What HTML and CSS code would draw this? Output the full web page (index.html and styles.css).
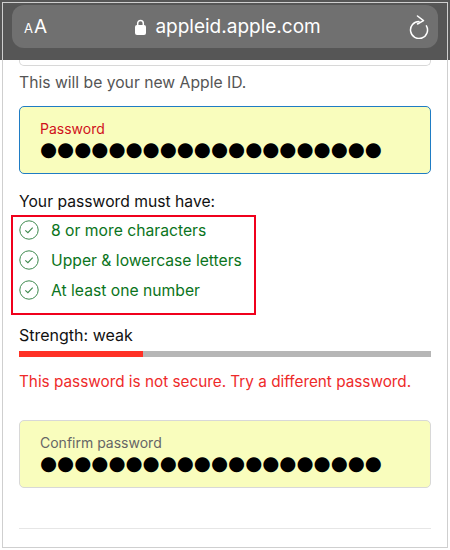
FILE: index.html
```html
<!DOCTYPE html>
<html lang="en">
<head>
    <meta charset="UTF-8">
    <title>Apple ID password</title>
    <meta name="viewport" content="width=device-width, initial-scale=1">
    <link rel="stylesheet" href="styles.css">
</head>
<body>
    <div class="screen">
        <header class="toolbar">
            <div class="address-bar">
                <span class="text-size"><small>A</small>A</span>
                <span class="address">
                    <svg class="lock" width="11" height="16" viewBox="0 0 11 16">
                        <path d="M2.7 7V4.2a2.8 2.8 0 0 1 5.6 0V7" fill="none" stroke="#fff" stroke-width="1.5"/>
                        <rect x="0" y="6" width="11" height="10" rx="2" fill="#fff"/>
                    </svg>
                    appleid.apple.com
                </span>
                <svg class="reload" width="20" height="24" viewBox="0 0 20 24">
                    <path d="M10 6.5A8.5 8.5 0 1 0 17.4 10.8" fill="none" stroke="#fff" stroke-width="1.5" stroke-linecap="round"/>
                    <path d="M8.5 1l6 4.6-6 3.4" fill="none" stroke="#fff" stroke-width="1.5" stroke-linecap="round" stroke-linejoin="round"/>
                </svg>
            </div>
        </header>

        <main class="content">
            <div class="field-stub"></div>
            <p class="hint">This will be your new Apple ID.</p>

            <div class="field field-focus">
                <div class="field-label label-error">Password</div>
                <div class="dots">●●●●●●●●●●●●●●●●●●●●</div>
            </div>

            <p class="rules-title">Your password must have:</p>
            <ul class="rules">
                <li>
                    <svg width="20" height="20" viewBox="0 0 20 20"><circle cx="10" cy="10" r="9.2" fill="none" stroke="#3d8a4e" stroke-width="1"/><path d="M6.3 10.3l2.6 2.4 4.8-5" fill="none" stroke="#3d8a4e" stroke-width="1.1"/></svg>
                    8 or more characters
                </li>
                <li>
                    <svg width="20" height="20" viewBox="0 0 20 20"><circle cx="10" cy="10" r="9.2" fill="none" stroke="#3d8a4e" stroke-width="1"/><path d="M6.3 10.3l2.6 2.4 4.8-5" fill="none" stroke="#3d8a4e" stroke-width="1.1"/></svg>
                    Upper &amp; lowercase letters
                </li>
                <li>
                    <svg width="20" height="20" viewBox="0 0 20 20"><circle cx="10" cy="10" r="9.2" fill="none" stroke="#3d8a4e" stroke-width="1"/><path d="M6.3 10.3l2.6 2.4 4.8-5" fill="none" stroke="#3d8a4e" stroke-width="1.1"/></svg>
                    At least one number
                </li>
            </ul>

            <p class="strength">Strength: weak</p>
            <div class="meter"><div class="meter-fill" style="width: 30%"></div></div>
            <p class="error">This password is not secure. Try a different password.</p>

            <div class="field field-confirm">
                <div class="field-label">Confirm password</div>
                <div class="dots">●●●●●●●●●●●●●●●●●●●●</div>
            </div>

            <hr class="divider">
        </main>

        <div class="frame"></div>
    </div>
</body>
</html>
```

FILE: styles.css
```css
body {
    margin: 0;
    background: white;
    font-family: Inter, "Liberation Sans", sans-serif;
}

.screen {
    position: relative;
    width: 450px;
    height: 550px;
    overflow: hidden;
}

.frame {
    position: absolute;
    top: 2px;
    left: 2px;
    right: 2px;
    bottom: 2px;
    border: 1px solid #cfcfcf;
    pointer-events: none;
}

.toolbar {
    height: 60px;
    box-sizing: border-box;
    padding: 5px 12px 0;
    background: #565656;
}

.address-bar {
    height: 43px;
    display: flex;
    align-items: center;
    justify-content: space-between;
    padding: 0 9px 0 12px;
    border-radius: 12px;
    background: #707070;
    color: white;
}

.text-size {
    font-size: 19px;
    line-height: 1;
}

.text-size small {
    font-size: 13px;
    margin-right: 1px;
}

.address {
    display: flex;
    align-items: center;
    gap: 9px;
    font-size: 19px;
}

.content {
    padding: 0 19px;
}

.field-stub {
    height: 5px;
    border: 1px solid #d8d8d8;
    border-top: none;
    border-radius: 0 0 5px 5px;
}

.hint {
    margin: 7px 0 0;
    font-size: 15.7px;
    line-height: 20px;
    color: #555;
}

.field {
    height: 68px;
    box-sizing: border-box;
    padding: 10px 20px 0;
    background: #f9fdbd;
    border: 1px solid #d8d8d8;
    border-radius: 5px;
}

.field-focus {
    margin-top: 13px;
    border-color: #1f7cc4;
}

.field-confirm {
    margin-top: 28px;
}

.field-label {
    font-size: 14px;
    line-height: 24px;
    color: #666;
}

.label-error {
    color: #d0121b;
}

.dots {
    font-family: "DejaVu Sans", sans-serif;
    font-size: 19.6px;
    line-height: 18px;
    color: black;
    white-space: nowrap;
}

.rules-title {
    margin: 18px 0 0;
    font-size: 15.7px;
    line-height: 20px;
    color: #111;
}

.rules {
    list-style: none;
    width: 245px;
    height: 100px;
    box-sizing: border-box;
    margin: 3px 0 0 -8px;
    padding: 0 0 0 6px;
    border: 2px solid #f0001c;
}

.rules li {
    height: 26px;
    margin-bottom: 4px;
    display: flex;
    align-items: center;
    gap: 12px;
    font-size: 15.7px;
    color: #0a7420;
}

.strength {
    margin: 10px 0 0;
    font-size: 16px;
    line-height: 20px;
    color: #111;
}

.meter {
    height: 6px;
    margin-top: 6px;
    background: #b6b6b6;
}

.meter-fill {
    height: 100%;
    background: #ff3126;
}

.error {
    margin: 15px 0 0;
    font-size: 15.3px;
    line-height: 20px;
    color: #ee2a2a;
}

.divider {
    margin: 40px 0 0;
    border: none;
    border-top: 1px solid #e6e6e6;
}
```
